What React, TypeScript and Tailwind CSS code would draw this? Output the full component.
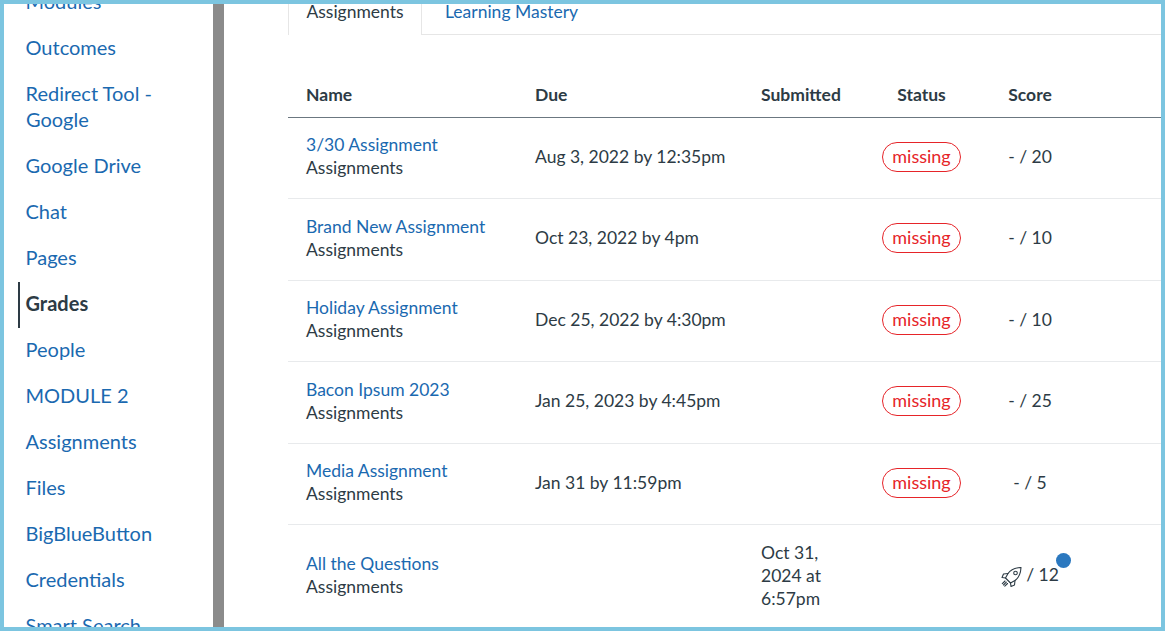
const navItems = [
  'Modules',
  'Outcomes',
  'Redirect Tool - Google',
  'Google Drive',
  'Chat',
  'Pages',
  'Grades',
  'People',
  'MODULE 2',
  'Assignments',
  'Files',
  'BigBlueButton',
  'Credentials',
  'Smart Search',
];

const rows = [
  { name: '3/30 Assignment', due: 'Aug 3, 2022 by 12:35pm', score: '- / 20' },
  { name: 'Brand New Assignment', due: 'Oct 23, 2022 by 4pm', score: '- / 10' },
  { name: 'Holiday Assignment', due: 'Dec 25, 2022 by 4:30pm', score: '- / 10' },
  { name: 'Bacon Ipsum 2023', due: 'Jan 25, 2023 by 4:45pm', score: '- / 25' },
  { name: 'Media Assignment', due: 'Jan 31 by 11:59pm', score: '- / 5' },
];

function RocketIcon() {
  return (
    <svg className="relative top-[3px]" width="21" height="20" viewBox="0 0 20 20" fill="none" stroke="#2d3b45" strokeWidth="1.1" strokeLinejoin="round" strokeLinecap="round">
      <path d="M19.500.5C13.500.8 9 3 6.500 6.500L4 11l5 5 4.500-2.500C17 11 19.200 6.500 19.500.5z" />
      <path d="M6.500 6.500 2 7 .5 10.500 4 11" />
      <path d="M13.500 13.500 13 18l-3.500 1.500L9 16" />
      <circle cx="14" cy="6" r="1.800" />
      <path d="M3.500 14 .8 16.700M6 16.500 3.300 19.200M4.800 15.200 2 18" />
    </svg>
  );
}

export default function App() {
  return (
    <div className="flex h-screen w-screen overflow-hidden border-4 border-[#7cc5e0] bg-white font-['Lato',sans-serif] text-[#2d3b45]">
      {/* Course nav */}
      <aside className="w-[209px] shrink-0">
        <ul className="-mt-[26px] pl-[14px] text-[20px] leading-[26px]">
          {navItems.map((item) =>
            item === 'Grades' ? (
              <li key={item} className="relative py-[10px] pl-[8px] -indent-[0.5px] font-bold">
                <span className="absolute left-0 top-[2px] h-[46px] w-[2px] bg-[#2d3b45]" />
                {item}
              </li>
            ) : (
              <li key={item} className="py-[10px] pl-[8px] pr-[30px] -indent-[0.5px] text-[#1a69b0]">
                <a href="#">{item}</a>
              </li>
            ),
          )}
        </ul>
      </aside>
      <div className="w-[11px] shrink-0 bg-[#8b8b8b]" />

      <main className="min-w-0 flex-1 pl-[64px] text-[17.5px] leading-[23px]">
        {/* Tabs */}
        <div className="-mt-[10px] flex h-[41px] border-b border-[#e6e6e6]">
          <div className="-mb-px flex w-[134px] items-center justify-center border-x border-[#e6e6e6] bg-white pb-[6px]">
            Assignments
          </div>
          <a href="#" className="flex items-center pb-[6px] pl-[23px] text-[#1a69b0]">Learning Mastery</a>
        </div>

        {/* Grades table */}
        <table className="mt-[36px] w-full table-fixed border-collapse">
          <colgroup>
            <col className="w-[229px]" />
            <col className="w-[226px]" />
            <col className="w-[116px]" />
            <col className="w-[125px]" />
            <col className="w-[92px]" />
            <col />
          </colgroup>
          <thead>
            <tr className="h-[46px] border-b border-[#6b7780] font-bold">
              <th className="pl-[18px] pt-[1px] text-left font-bold">Name</th>
              <th className="pl-[18px] pt-[1px] text-left font-bold">Due</th>
              <th className="pl-[18px] pt-[1px] text-left font-bold">Submitted</th>
              <th className="pt-[1px] text-center font-bold">Status</th>
              <th className="pt-[1px] text-center font-bold">Score</th>
              <th />
            </tr>
          </thead>
          <tbody>
            {rows.map((row) => (
              <tr key={row.name} className="h-[81.5px] border-b border-[#e8eaec]">
                <td className="pb-[3px] pl-[18px]">
                  <a href="#" className="block text-[#1a69b0]">{row.name}</a>
                  <div>Assignments</div>
                </td>
                <td className="pb-[3px] pl-[18px]">{row.due}</td>
                <td />
                <td className="pb-[2px] text-center">
                  <span className="inline-block h-[30px] w-[79px] rounded-full border border-[#e62429] text-center text-[18px] leading-[26px] text-[#e62429]">
                    missing
                  </span>
                </td>
                <td className="pb-[3px] text-center">{row.score}</td>
                <td />
              </tr>
            ))}
            <tr className="h-[102px]">
              <td className="pb-[2px] pl-[18px]">
                <a href="#" className="block text-[#1a69b0]">All the Questions</a>
                <div>Assignments</div>
              </td>
              <td />
              <td className="pl-[18px]">Oct 31, 2024 at 6:57pm</td>
              <td />
              <td className="text-center">
                <span className="relative inline-flex items-center gap-[4px]">
                  <RocketIcon />
                  / 12
                  <span className="absolute -right-[12px] -top-[10px] h-[15px] w-[15px] rounded-full bg-[#2b78bf]" />
                </span>
              </td>
              <td />
            </tr>
          </tbody>
        </table>
      </main>
    </div>
  );
}
